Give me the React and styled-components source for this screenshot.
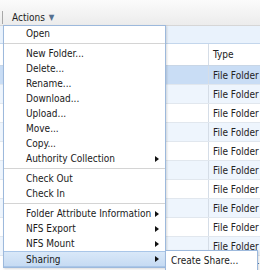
import React from 'react'
import styled, { createGlobalStyle } from 'styled-components'

const menuItems = [
  { label: 'Open' },
  { sep: true },
  { label: 'New Folder...' },
  { label: 'Delete...' },
  { label: 'Rename...' },
  { label: 'Download...' },
  { label: 'Upload...' },
  { label: 'Move...' },
  { label: 'Copy...' },
  { label: 'Authority Collection', sub: true },
  { sep: true },
  { label: 'Check Out' },
  { label: 'Check In' },
  { sep: true },
  { label: 'Folder Attribute Information', sub: true },
  { label: 'NFS Export', sub: true },
  { label: 'NFS Mount', sub: true },
  { label: 'Sharing', sub: true, active: true }
]

const rows = Array.from({ length: 11 }, (_, i) => i)

const App = () => {
  return (
    <>
      <GlobalStyle />
      <Page>
        <Toolbar>
          <ToolSep />
          <ActionsButton>
            Actions <Caret>▼</Caret>
          </ActionsButton>
        </Toolbar>
        <InfoBand />
        <Grid>
          <HeadRow>
            <NameCell />
            <TypeCell>Type</TypeCell>
          </HeadRow>
          {rows.map(i => (
            <Row key={i} $selected={i === 0} $alt={i % 2 === 1}>
              <NameCell />
              <TypeCell>File Folder</TypeCell>
            </Row>
          ))}
        </Grid>

        <Menu>
          {menuItems.map((item, i) =>
            item.sep ? (
              <MenuSep key={i} />
            ) : (
              <MenuItem key={i} $active={item.active}>
                <span>{item.label}</span>
                {item.sub && <SubArrow />}
                {item.active && (
                  <SubMenu>
                    <MenuItem>Create Share...</MenuItem>
                  </SubMenu>
                )}
              </MenuItem>
            )
          )}
        </Menu>
      </Page>
    </>
  )
}

export default App

const GlobalStyle = createGlobalStyle`
  body {
    margin: 0;
    background: #ffffff;
    font-family: "DejaVu Sans Condensed", "DejaVu Sans", sans-serif;
    font-size: 10px;
    color: #1a1a1a;
  }
`

const Page = styled.div`
  width: 260px;
  height: 270px;
  position: relative;
  overflow: hidden;
  background: #ffffff;
`

const Toolbar = styled.div`
  height: 26px;
  display: flex;
  align-items: flex-end;
  padding: 0 0 1px 2px;
  box-sizing: border-box;
  background: linear-gradient(#fbfbfb, #ececec);
  border-bottom: 1px solid #d6d6d6;
`

const ToolSep = styled.div`
  width: 1px;
  height: 13px;
  margin-bottom: 0;
  background: #a8a8a8;
`

const ActionsButton = styled.div`
  display: flex;
  align-items: center;
  height: 14px;
  margin-left: 9px;
  color: #222;
`

const Caret = styled.span`
  font-size: 8px;
  color: #55708f;
  margin-left: 4px;
`

const InfoBand = styled.div`
  height: 17px;
  background: #e9f2fc;
  border-bottom: 1px solid #c3d6ec;
`

const Grid = styled.div`
  display: flex;
  flex-direction: column;
`

const HeadRow = styled.div`
  display: flex;
  height: 22px;
  align-items: stretch;
  background: #ffffff;
  border-bottom: 1px solid #c8d6e6;
  box-sizing: border-box;
`

const Row = styled.div`
  display: flex;
  height: 19px;
  align-items: stretch;
  box-sizing: border-box;
  border-bottom: 1px solid #e1e7ee;
  background: ${p => (p.$selected ? '#c9ddf5' : p.$alt ? '#eef5fd' : '#ffffff')};
`

const NameCell = styled.div`
  width: 209px;
  border-right: 1px solid #d5dde7;
  box-sizing: border-box;
`

const TypeCell = styled.div`
  display: flex;
  align-items: center;
  padding-left: 4px;
  white-space: nowrap;
  color: #222;
`

const Menu = styled.div`
  position: absolute;
  left: 3px;
  top: 25px;
  width: 163px;
  background: #ffffff;
  border: 1px solid #9db9dc;
  box-shadow: 1px 1px 2px rgba(0, 0, 0, 0.15);
  box-sizing: border-box;
`

const MenuItem = styled.div`
  position: relative;
  display: flex;
  align-items: center;
  padding-left: 22px;
  white-space: nowrap;
  color: #1a1a1a;
  box-sizing: border-box;
  background: ${p => (p.$active ? 'linear-gradient(#d9e8f8, #c6dbf3)' : 'transparent')};
  border-top: 1px solid ${p => (p.$active ? '#a9c6e8' : 'transparent')};
  border-bottom: 1px solid ${p => (p.$active ? '#a9c6e8' : 'transparent')};
  height: ${p => (p.$active ? '16px' : '15px')};
`

const MenuSep = styled.div`
  height: 1px;
  margin: 2px 0;
  background: #d4d4d4;
`

const SubArrow = styled.span`
  position: absolute;
  right: 6px;
  top: 50%;
  margin-top: -3px;
  width: 0;
  height: 0;
  border-top: 3px solid transparent;
  border-bottom: 3px solid transparent;
  border-left: 4px solid #111;
`

const SubMenu = styled.div`
  position: absolute;
  left: 100%;
  top: -2px;
  width: 91px;
  padding: 2px 0;
  background: #ffffff;
  border: 1px solid #9db9dc;
  box-shadow: 1px 1px 2px rgba(0, 0, 0, 0.15);

  & > div {
    padding-left: 5px;
  }
`
